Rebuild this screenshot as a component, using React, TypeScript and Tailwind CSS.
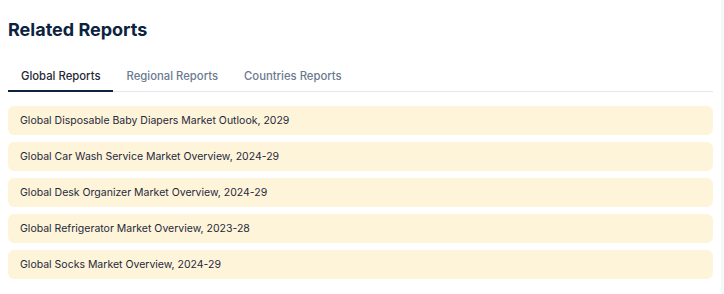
import React, { useState } from 'react';

const tabs = ['Global Reports', 'Regional Reports', 'Countries Reports'];

const reports = [
  'Global Disposable Baby Diapers Market Outlook, 2029',
  'Global Car Wash Service Market Overview, 2024-29',
  'Global Desk Organizer Market Overview, 2024-29',
  'Global Refrigerator Market Overview, 2023-28',
  'Global Socks Market Overview, 2024-29',
];

export default function App() {
  const [active, setActive] = useState(0);

  return (
    <div className="flex h-[294px] w-[724px] bg-white font-['Inter',sans-serif]">
      <div className="flex-1 px-2 pt-[18px]">
        <h2 className="text-[18px] font-bold leading-[24px] text-[#0c2340]">Related Reports</h2>

        <div className="mt-[26px] flex border-b border-[#e5e7eb]">
          {tabs.map((t, i) => (
            <button
              key={t}
              onClick={() => setActive(i)}
              className={`-mb-px px-[13px] pb-[6px] text-[11.3px] font-medium leading-[16px] ${
                i === active
                  ? 'border-b-2 border-[#0c2340] text-[#1f2937]'
                  : 'border-b-2 border-transparent text-[#6b7a90]'
              }`}
            >
              {t}
            </button>
          ))}
        </div>

        <div className="mt-[14px] flex flex-col gap-[7px]">
          {reports.map((r) => (
            <div
              key={r}
              className="rounded-md bg-[#fef4da] px-3 py-[6px] text-[10.5px] leading-[17px] text-[#1e293b]"
            >
              {r}
            </div>
          ))}
        </div>
      </div>
      <div className="w-[3px] bg-[#f4faf7]" />
    </div>
  );
}
